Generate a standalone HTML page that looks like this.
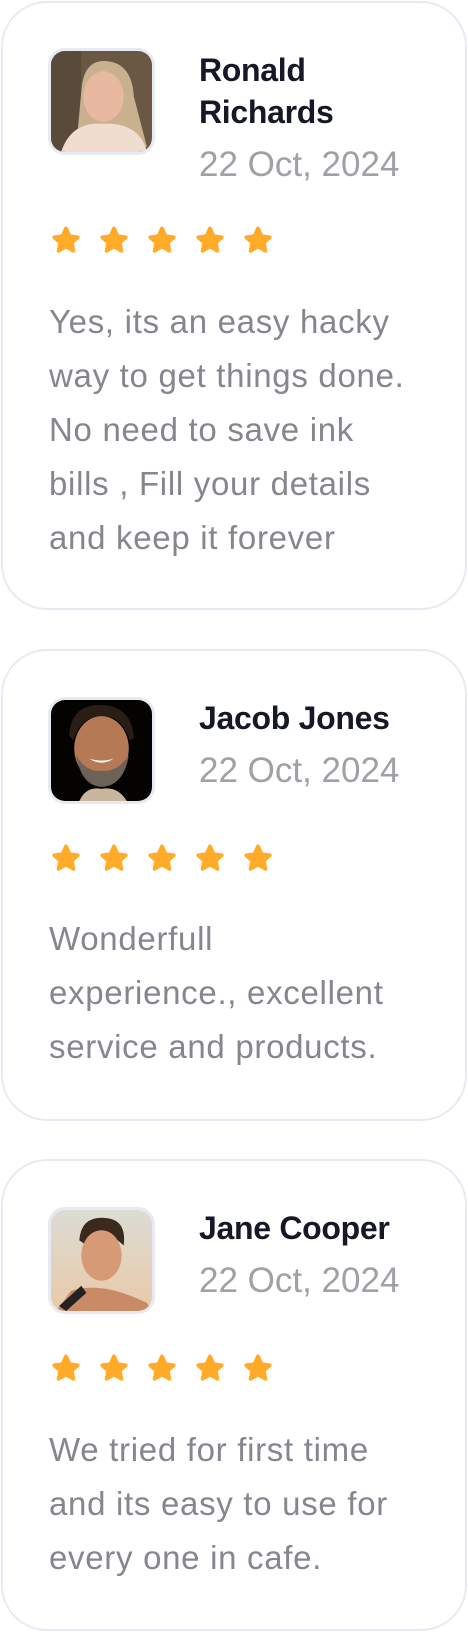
<!DOCTYPE html>
<html><head><meta charset="utf-8"><style>
*{margin:0;padding:0;box-sizing:border-box}
body{width:468px;height:1632px;background:#fff;position:relative;overflow:hidden;font-family:"Liberation Sans",sans-serif}
.card{position:absolute;left:1px;width:466px;border:2px solid #e8eaf3;border-radius:46px;background:#fff}
.av{position:absolute;left:48px;width:107px;height:107px;border:3px solid #e8eaf3;border-radius:17px;overflow:hidden}
.av svg{display:block;width:101px;height:101px}
.name{position:absolute;left:199px;font-size:32px;font-weight:bold;line-height:42px;color:#161827;white-space:nowrap;letter-spacing:-0.3px}
.date{position:absolute;left:199px;font-size:35px;line-height:40px;color:#a0a1a6;white-space:nowrap}
.stars{position:absolute;left:50px;height:32px;display:flex;gap:16px}
.stars svg{width:32px;height:32px}
.txt{position:absolute;left:49px;width:419px;font-size:33px;line-height:54px;color:#85868e;white-space:nowrap;letter-spacing:0.7px}
</style></head><body>
<svg width="0" height="0" style="position:absolute"><defs><symbol id="st" viewBox="0 0 32 32"><path d="M16 2.5c.9 0 1.5.6 1.9 1.4l3 6.6 7 .9c1.9.3 2.4 2 1.1 3.2l-5.2 4.8 1.4 7c.4 1.9-1.2 2.9-2.8 2l-6.4-3.6-6.4 3.6c-1.6.9-3.2-.1-2.8-2l1.4-7-5.2-4.8c-1.3-1.2-.8-2.9 1.1-3.2l7-.9 3-6.6c.4-.8 1-1.4 1.9-1.4z" fill="#ffaa28"/></symbol></defs></svg>

<div class="card" style="top:1px;height:609px"></div>
<div class="av" style="top:48px"><svg viewBox="0 0 100 100"><rect width="100" height="100" fill="#6b5844"/><rect x="0" y="0" width="30" height="100" fill="#5a4a3a"/><path d="M30 40Q32 8 55 10Q80 12 82 45L95 95H25Z" fill="#c9b08e"/><ellipse cx="52" cy="45" rx="20" ry="25" fill="#e8b8a0"/><path d="M10 100Q20 70 50 72Q88 70 95 100Z" fill="#f1dcd0"/></svg></div>
<div class="name" style="top:49px">Ronald<br>Richards</div>
<div class="date" style="top:145px">22 Oct, 2024</div>
<div class="stars" style="top:224px"><svg><use href="#st"/></svg><svg><use href="#st"/></svg><svg><use href="#st"/></svg><svg><use href="#st"/></svg><svg><use href="#st"/></svg></div>
<div class="txt" style="top:295px">Yes, its an easy hacky<br>way to get things done.<br>No need to save ink<br>bills , Fill your details<br>and keep it forever</div>

<div class="card" style="top:649px;height:472px"></div>
<div class="av" style="top:697px"><svg viewBox="0 0 100 100"><rect width="100" height="100" fill="#050302"/><path d="M18 35Q20 4 50 5Q80 6 82 38L78 40Q70 15 50 16Q30 16 22 40Z" fill="#2a1d16"/><ellipse cx="50" cy="48" rx="27" ry="32" fill="#b57a55"/><path d="M25 55Q30 85 50 86Q72 85 77 55Q65 72 50 70Q35 72 25 55Z" fill="#6e6258"/><path d="M38 58Q50 66 62 58Q50 62 38 58Z" fill="#fff"/><path d="M28 100Q35 85 50 88Q66 85 75 100Z" fill="#c9b69c"/></svg></div>
<div class="name" style="top:697px">Jacob Jones</div>
<div class="date" style="top:751px">22 Oct, 2024</div>
<div class="stars" style="top:842px"><svg><use href="#st"/></svg><svg><use href="#st"/></svg><svg><use href="#st"/></svg><svg><use href="#st"/></svg><svg><use href="#st"/></svg></div>
<div class="txt" style="top:912px">Wonderfull<br>experience., excellent<br>service and products.</div>

<div class="card" style="top:1159px;height:472px"></div>
<div class="av" style="top:1207px"><svg viewBox="0 0 100 100"><defs><linearGradient id="sk" x1="0" y1="0" x2="0" y2="1"><stop offset="0" stop-color="#dcdcd4"/><stop offset="1" stop-color="#e9c9a8"/></linearGradient></defs><rect width="100" height="100" fill="url(#sk)"/><path d="M28 30Q30 5 55 8Q75 10 72 35L60 25Q45 18 35 35Z" fill="#3a2a1e"/><ellipse cx="50" cy="45" rx="20" ry="25" fill="#d79a76"/><path d="M5 100L20 80Q50 70 95 92L100 100Z" fill="#c98a66"/><path d="M8 95L30 75L35 82L15 100Z" fill="#222"/></svg></div>
<div class="name" style="top:1207px">Jane Cooper</div>
<div class="date" style="top:1261px">22 Oct, 2024</div>
<div class="stars" style="top:1352px"><svg><use href="#st"/></svg><svg><use href="#st"/></svg><svg><use href="#st"/></svg><svg><use href="#st"/></svg><svg><use href="#st"/></svg></div>
<div class="txt" style="top:1423px">We tried for first time<br>and its easy to use for<br>every one in cafe.</div>
</body></html>
